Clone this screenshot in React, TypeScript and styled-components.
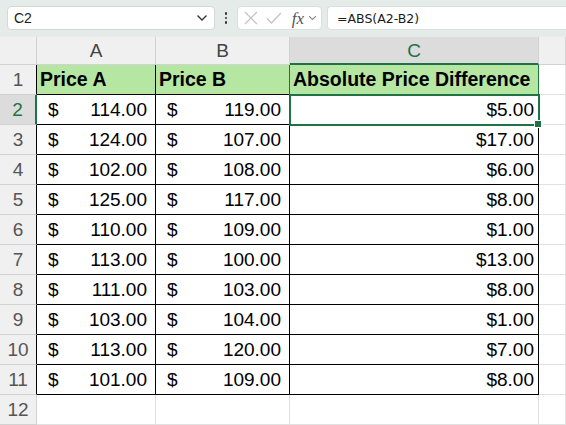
import React from "react";
import styled, { createGlobalStyle } from "styled-components";

const GREEN = "#1f7244";
const GRID = "#e1e1e1";
const HEAD_LINE = "#d2d2d2";

const GlobalStyle = createGlobalStyle`
  html, body {
    margin: 0;
    padding: 0;
    background: #ffffff;
    overflow: hidden;
  }
  body {
    font-family: "Liberation Sans", Arial, sans-serif;
  }
`;

type Row = { a: string; b: string; c: string };

const rows: Row[] = [
  { a: "114.00", b: "119.00", c: "$5.00" },
  { a: "124.00", b: "107.00", c: "$17.00" },
  { a: "102.00", b: "108.00", c: "$6.00" },
  { a: "125.00", b: "117.00", c: "$8.00" },
  { a: "110.00", b: "109.00", c: "$1.00" },
  { a: "113.00", b: "100.00", c: "$13.00" },
  { a: "111.00", b: "103.00", c: "$8.00" },
  { a: "103.00", b: "104.00", c: "$1.00" },
  { a: "113.00", b: "120.00", c: "$7.00" },
  { a: "101.00", b: "109.00", c: "$8.00" },
];

const App: React.FC = () => {
  return (
    <>
      <GlobalStyle />
      <Page>
        <Toolbar>
          <NameBox>
            <span>C2</span>
            <Chevron width="12" height="8" viewBox="0 0 12 8">
              <path d="M1.5 1.5 L6 6 L10.5 1.5" />
            </Chevron>
          </NameBox>
          <Dots>
            <i />
            <i />
            <i />
          </Dots>
          <FxBox>
            <svg width="14" height="14" viewBox="0 0 14 14">
              <path d="M1 1 L13 13 M13 1 L1 13" stroke="#c3c3c3" strokeWidth="1.3" fill="none" />
            </svg>
            <svg width="16" height="14" viewBox="0 0 16 14">
              <path d="M1 7.5 L5.5 12 L15 2" stroke="#c3c3c3" strokeWidth="1.3" fill="none" />
            </svg>
            <Fx>fx</Fx>
            <SmallChevron width="9" height="6" viewBox="0 0 9 6">
              <path d="M1 1 L4.5 4.5 L8 1" />
            </SmallChevron>
          </FxBox>
          <FormulaBox>=ABS(A2-B2)</FormulaBox>
        </Toolbar>

        <Sheet>
          <Corner />
          <ColHeader>A</ColHeader>
          <ColHeader>B</ColHeader>
          <ColHeader $selected>C</ColHeader>
          <ColHeader />

          <RowHeader $edge="#000">1</RowHeader>
          <Cell $head $right="#000" $bottom="#000">Price A</Cell>
          <Cell $head $right={GREEN} $bottom="#000">Price B</Cell>
          <Cell $head $right={GREEN} $bottom="#000">Absolute Price Difference</Cell>
          <Cell />

          {rows.map((r, i) => {
            const selected = i === 0;
            return (
              <React.Fragment key={i}>
                <RowHeader $selected={selected} $edge={selected ? GREEN : "#000"}>
                  {i + 2}
                </RowHeader>
                <Cell $right="#000" $bottom="#000">
                  <Money>
                    <span>$</span>
                    <span>{r.a}</span>
                  </Money>
                </Cell>
                <Cell $right="#000" $bottom="#000">
                  <Money>
                    <span>$</span>
                    <span>{r.b}</span>
                  </Money>
                </Cell>
                <Cell $right="#000" $bottom="#000" $active={selected}>
                  <Amount>{r.c}</Amount>
                  {selected && <FillHandle />}
                </Cell>
                <Cell />
              </React.Fragment>
            );
          })}

          <RowHeader $edge={HEAD_LINE}>12</RowHeader>
          <Cell />
          <Cell />
          <Cell />
          <Cell />
        </Sheet>
      </Page>
    </>
  );
};

export default App;

const Page = styled.div`
  width: 566px;
  height: 425px;
  overflow: hidden;
  display: flex;
  flex-direction: column;
`;

const Toolbar = styled.div`
  height: 39px;
  box-sizing: border-box;
  background: #e4ebe8;
  display: flex;
  align-items: center;
  padding: 0 0 1px 7px;
`;

const NameBox = styled.div`
  width: 208px;
  height: 24px;
  box-sizing: border-box;
  background: #ffffff;
  border: 1px solid #d3d9d6;
  border-radius: 4px;
  display: flex;
  align-items: center;
  justify-content: space-between;
  padding: 0 6px 0 6px;
  font-size: 14px;
  color: #1a1a1a;
`;

const Chevron = styled.svg`
  fill: none;
  stroke: #333;
  stroke-width: 1.4;
`;

const SmallChevron = styled.svg`
  fill: none;
  stroke: #8a8a8a;
  stroke-width: 1.1;
`;

const Dots = styled.div`
  width: 22px;
  display: flex;
  flex-direction: column;
  align-items: center;
  gap: 2px;

  i {
    width: 2.5px;
    height: 2.5px;
    border-radius: 50%;
    background: #333;
  }
`;

const FxBox = styled.div`
  width: 85px;
  height: 24px;
  box-sizing: border-box;
  background: #ffffff;
  border: 1px solid #d9dfdc;
  border-radius: 4px;
  display: flex;
  align-items: center;
  gap: 8px;
  padding: 0 4px 0 6px;
`;

const Fx = styled.span`
  font-family: "Liberation Serif", "Times New Roman", serif;
  font-style: italic;
  font-size: 17px;
  color: #555;
  margin-left: 2px;
  margin-right: -4px;
  line-height: 1;
`;

const FormulaBox = styled.div`
  flex: 1;
  margin-left: 5px;
  height: 24px;
  box-sizing: border-box;
  background: #ffffff;
  border: 1px solid #d9dfdc;
  border-right: none;
  border-radius: 4px 0 0 4px;
  display: flex;
  align-items: center;
  padding-left: 9px;
  font-family: "DejaVu Sans", sans-serif;
  font-size: 12.5px;
  color: #1a1a1a;
`;

const Sheet = styled.div`
  display: grid;
  grid-template-columns: 37px 119px 134px 249px 1fr;
  grid-template-rows: 28px;
  grid-auto-rows: 30px;
  font-size: 19px;
  color: #000;
`;

const Corner = styled.div`
  background: #f0f0f0;
  border-right: 1px solid ${HEAD_LINE};
  border-bottom: 1px solid ${HEAD_LINE};
  box-sizing: border-box;
`;

const ColHeader = styled.div<{ $selected?: boolean }>`
  box-sizing: border-box;
  background: ${(p) => (p.$selected ? "#dcdcdc" : "#f0f0f0")};
  color: ${(p) => (p.$selected ? GREEN : "#444")};
  border-right: 1px solid ${HEAD_LINE};
  border-bottom: ${(p) => (p.$selected ? `2px solid ${GREEN}` : `1px solid ${HEAD_LINE}`)};
  display: flex;
  align-items: center;
  justify-content: center;
  padding-top: 1px;
`;

const RowHeader = styled.div<{ $selected?: boolean; $edge: string }>`
  box-sizing: border-box;
  background: ${(p) => (p.$selected ? "#dcdcdc" : "#f0f0f0")};
  color: ${(p) => (p.$selected ? GREEN : "#555")};
  border-bottom: 1px solid ${HEAD_LINE};
  border-right: ${(p) => (p.$selected ? `2px solid ${p.$edge}` : `1px solid ${p.$edge}`)};
  display: flex;
  align-items: center;
  justify-content: center;
`;

const Cell = styled.div<{
  $head?: boolean;
  $right?: string;
  $bottom?: string;
  $active?: boolean;
}>`
  position: relative;
  box-sizing: border-box;
  background: ${(p) => (p.$head ? "#b5e6a2" : "#ffffff")};
  border-right: 1px solid ${(p) => p.$right || GRID};
  border-bottom: 1px solid ${(p) => p.$bottom || GRID};
  display: flex;
  align-items: center;
  padding: 0 4px 0 3px;
  white-space: nowrap;
  font-weight: ${(p) => (p.$head ? 700 : 400)};
  font-size: ${(p) => (p.$head ? "19.5px" : "19px")};
  ${(p) =>
    p.$active &&
    `
    outline: 2px solid ${GREEN};
    outline-offset: -1px;
    z-index: 1;
  `}
`;

const Money = styled.div`
  flex: 1;
  display: flex;
  justify-content: space-between;
  padding: 0 4px 0 8px;
`;

const Amount = styled.div`
  flex: 1;
  text-align: right;
`;

const FillHandle = styled.div`
  position: absolute;
  right: -4px;
  bottom: -4px;
  width: 6px;
  height: 6px;
  background: ${GREEN};
  border: 1px solid #ffffff;
`;
